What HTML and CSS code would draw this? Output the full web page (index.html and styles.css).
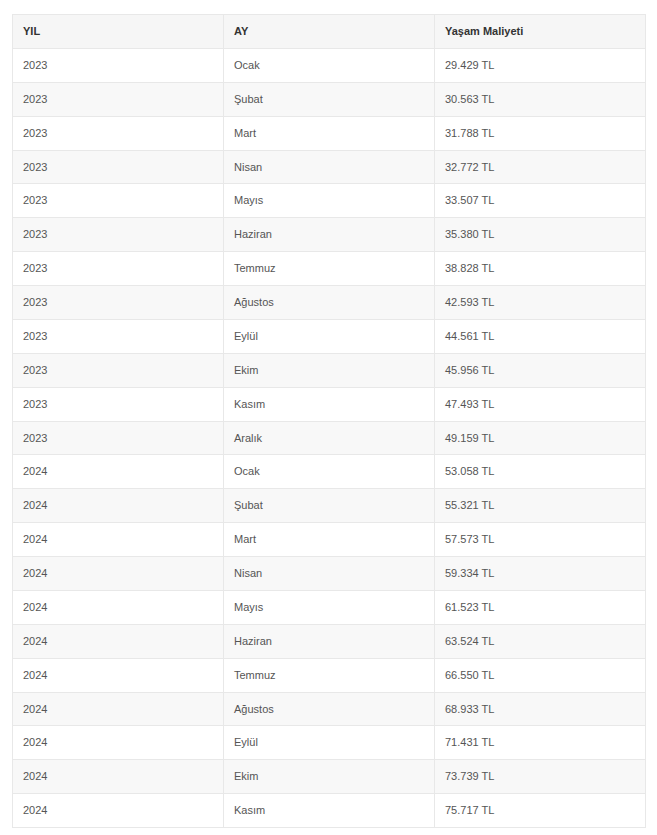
FILE: index.html
```html
<!DOCTYPE html>
<html lang="tr">
<head>
<meta charset="utf-8">
<link rel="stylesheet" href="styles.css">
</head>
<body>
<table class="cost-table">
<thead>
<tr><th>YIL</th><th>AY</th><th>Yaşam Maliyeti</th></tr>
</thead>
<tbody>
<tr><td>2023</td><td>Ocak</td><td>29.429 TL</td></tr>
<tr><td>2023</td><td>Şubat</td><td>30.563 TL</td></tr>
<tr><td>2023</td><td>Mart</td><td>31.788 TL</td></tr>
<tr><td>2023</td><td>Nisan</td><td>32.772 TL</td></tr>
<tr><td>2023</td><td>Mayıs</td><td>33.507 TL</td></tr>
<tr><td>2023</td><td>Haziran</td><td>35.380 TL</td></tr>
<tr><td>2023</td><td>Temmuz</td><td>38.828 TL</td></tr>
<tr><td>2023</td><td>Ağustos</td><td>42.593 TL</td></tr>
<tr><td>2023</td><td>Eylül</td><td>44.561 TL</td></tr>
<tr><td>2023</td><td>Ekim</td><td>45.956 TL</td></tr>
<tr><td>2023</td><td>Kasım</td><td>47.493 TL</td></tr>
<tr><td>2023</td><td>Aralık</td><td>49.159 TL</td></tr>
<tr><td>2024</td><td>Ocak</td><td>53.058 TL</td></tr>
<tr><td>2024</td><td>Şubat</td><td>55.321 TL</td></tr>
<tr><td>2024</td><td>Mart</td><td>57.573 TL</td></tr>
<tr><td>2024</td><td>Nisan</td><td>59.334 TL</td></tr>
<tr><td>2024</td><td>Mayıs</td><td>61.523 TL</td></tr>
<tr><td>2024</td><td>Haziran</td><td>63.524 TL</td></tr>
<tr><td>2024</td><td>Temmuz</td><td>66.550 TL</td></tr>
<tr><td>2024</td><td>Ağustos</td><td>68.933 TL</td></tr>
<tr><td>2024</td><td>Eylül</td><td>71.431 TL</td></tr>
<tr><td>2024</td><td>Ekim</td><td>73.739 TL</td></tr>
<tr><td>2024</td><td>Kasım</td><td>75.717 TL</td></tr>
</tbody>
</table>
</body>
</html>
```
FILE: styles.css
```css
html, body {
  margin: 0;
  background: #ffffff;
}
body {
  padding: 14px 11px 14px 12px;
  font-family: "Liberation Sans", Arial, sans-serif;
  font-size: 11px;
  color: #555555;
}
.cost-table {
  width: 100%;
  border-collapse: collapse;
  table-layout: fixed;
}
.cost-table th,
.cost-table td {
  border: 1px solid #e8e8e8;
  padding: 10px 10px;
  text-align: left;
  line-height: 12.875px;
}
.cost-table th {
  background: #f6f6f6;
  color: #333333;
  font-weight: bold;
}
.cost-table tbody tr:nth-child(even) td {
  background: #f8f8f8;
}
```
